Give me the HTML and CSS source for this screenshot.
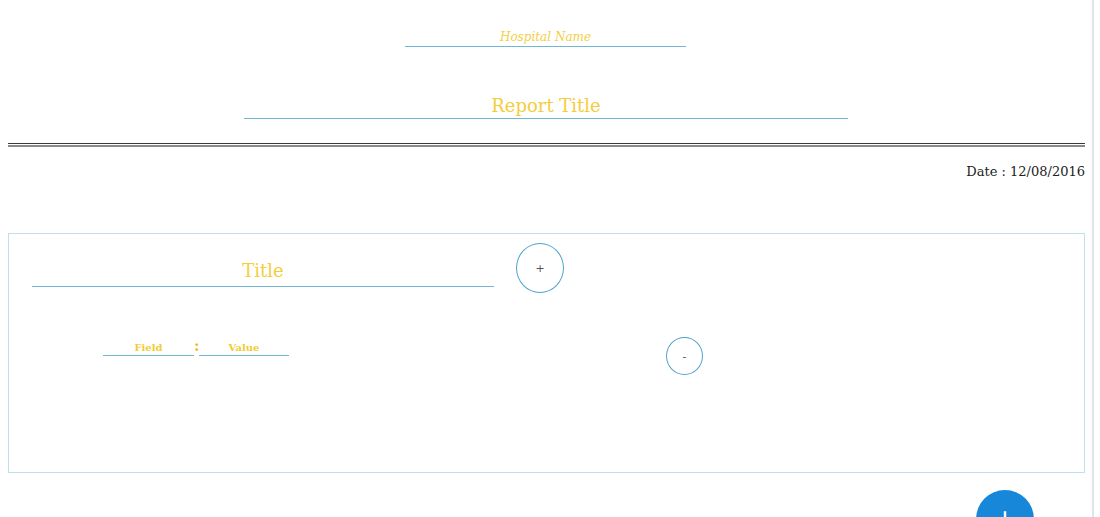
FILE: index.html
```html
<!DOCTYPE html>
<html>
<head>
<meta charset="utf-8">
<link rel="stylesheet" href="styles.css">
</head>
<body>
<div class="page">
  <div class="hospital">Hospital Name</div>
  <div class="report-title">Report Title</div>
  <div class="rule"></div>
  <div class="date">Date : 12/08/2016</div>
  <div class="section">
    <div class="row-head">
      <div class="sec-title">Title</div>
      <button class="circle add">+</button>
    </div>
    <div class="row-field">
      <div class="field">Field</div>
      <div class="colon">:</div>
      <div class="value">Value</div>
      <button class="circle remove">-</button>
    </div>
  </div>
</div>
<button class="fab">+</button>
</body>
</html>
```

FILE: styles.css
```css
html, body {
  margin: 0;
  padding: 0;
  background: #fff;
}
body {
  font-family: "DejaVu Serif", "Liberation Serif", serif;
  overflow: hidden;
  height: 517px;
}
.page {
  width: 1094px;
  height: 517px;
  padding: 27px 7px 0 8px;
  box-sizing: border-box;
  border-right: 2px solid #e4e4e4;
}
.hospital {
  width: 281px;
  margin: 0 auto 0 397px;
  padding-top: 1px;
  text-align: center;
  font-style: italic;
  font-size: 12px;
  line-height: 18px;
  color: #f3cf45;
  border-bottom: 1px solid #6fb6d6;
}
.report-title {
  width: 604px;
  margin: 47px 0 0 236px;
  text-align: center;
  font-size: 18px;
  line-height: 24px;
  color: #f5cd3c;
  border-bottom: 1px solid #6fb6d6;
}
.rule {
  margin-top: 24px;
  height: 1px;
  border-top: 1px solid #3a3a3a;
  border-bottom: 2px solid #8a8a8a;
}
.date {
  margin-top: 15px;
  text-align: right;
  font-size: 13px;
  line-height: 20px;
  color: #222;
}
.section {
  margin-top: 51px;
  height: 238px;
  border: 1px solid #bfe2ea;
  box-sizing: content-box;
}
.row-head {
  display: flex;
  align-items: flex-start;
  padding: 9px 0 0 23px;
}
.sec-title {
  width: 462px;
  margin-top: 16px;
  padding-bottom: 3px;
  text-align: center;
  font-size: 18px;
  line-height: 24px;
  color: #f5cd3c;
  border-bottom: 1px solid #6fb6d6;
}
.circle {
  border: 1px solid #4da3cc;
  border-radius: 50%;
  background: #fff;
  color: #555;
  padding: 0;
  font-family: "DejaVu Sans", sans-serif;
  display: flex;
  align-items: center;
  justify-content: center;
}
.add {
  width: 48px;
  height: 50px;
  margin-left: 22px;
  font-size: 11px;
}
.row-field {
  display: flex;
  align-items: flex-end;
  padding-left: 94px;
  margin-top: 44px;
}
.field, .value {
  width: 91px;
  text-align: center;
  font-size: 10px;
  font-weight: bold;
  line-height: 14px;
  color: #f3cc2f;
  border-bottom: 1px solid #6fb6d6;
}
.value {
  width: 90px;
}
.colon {
  width: 5px;
  text-align: center;
  font-size: 15px;
  font-weight: bold;
  line-height: 18px;
  color: #f0b81e;
  margin-bottom: 1px;
}
.remove {
  width: 37px;
  height: 38px;
  margin-left: 377px;
  margin-bottom: -19px;
  font-size: 11px;
}
.fab {
  position: fixed;
  left: 976px;
  top: 490px;
  width: 58px;
  height: 58px;
  border: none;
  border-radius: 50%;
  background: #1687d9;
  color: #fff;
  font-size: 26px;
  font-family: "DejaVu Sans", sans-serif;
  padding: 0;
  line-height: 58px;
}
```
